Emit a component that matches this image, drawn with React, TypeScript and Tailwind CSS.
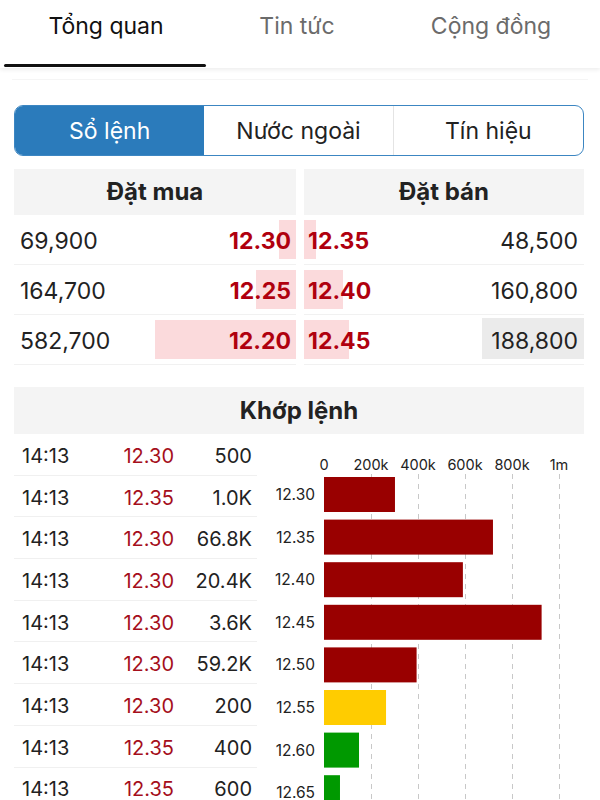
import React from "react";

const bids = [
  { vol: "69,900", price: "12.30", bar: 17 },
  { vol: "164,700", price: "12.25", bar: 40 },
  { vol: "582,700", price: "12.20", bar: 141 },
];

const asks = [
  { vol: "48,500", price: "12.35", bar: 12, hi: false },
  { vol: "160,800", price: "12.40", bar: 39, hi: false },
  { vol: "188,800", price: "12.45", bar: 45, hi: true },
];

const trades = [
  ["14:13", "12.30", "500"],
  ["14:13", "12.35", "1.0K"],
  ["14:13", "12.30", "66.8K"],
  ["14:13", "12.30", "20.4K"],
  ["14:13", "12.30", "3.6K"],
  ["14:13", "12.30", "59.2K"],
  ["14:13", "12.30", "200"],
  ["14:13", "12.35", "400"],
  ["14:13", "12.35", "600"],
];

// volume per price level, thousands
const levels = [
  { p: "12.30", v: 302, c: "#990000" },
  { p: "12.35", v: 719, c: "#990000" },
  { p: "12.40", v: 591, c: "#990000" },
  { p: "12.45", v: 926, c: "#990000" },
  { p: "12.50", v: 394, c: "#990000" },
  { p: "12.55", v: 264, c: "#ffcc00" },
  { p: "12.60", v: 149, c: "#009900" },
  { p: "12.65", v: 68, c: "#009900" },
];

const font = { fontFamily: "Inter, Roboto, 'Noto Sans', sans-serif" };

function VolumeChart() {
  const x0 = 54;
  const step = 47; // px per 200k
  const ticks = ["0", "200k", "400k", "600k", "800k", "1m"];
  return (
    <svg width="314" height="375" className="block" style={font}>
      {ticks.map((t, i) => (
        <text key={t} x={x0 + i * step} y={36} textAnchor="middle" fontSize="14.5" fill="#222">
          {t}
        </text>
      ))}
      {ticks.slice(1).map((t, i) => (
        <line
          key={t}
          x1={x0 + (i + 1) * step + 0.5}
          x2={x0 + (i + 1) * step + 0.5}
          y1={40}
          y2={375}
          stroke="#c8c8c8"
          strokeDasharray="5 5"
        />
      ))}
      {levels.map((l, i) => {
        const y = 43 + i * 42.6;
        return (
          <g key={l.p}>
            <rect x={x0} y={y} width={(l.v / 1000) * step * 5} height={35} fill={l.c} />
            <text x={45} y={y + 23} textAnchor="end" fontSize="15.5" fill="#222">
              {l.p}
            </text>
          </g>
        );
      })}
    </svg>
  );
}

export default function App() {
  return (
    <div className="w-[600px] h-[800px] overflow-hidden bg-white text-[#222]" style={font}>
      {/* top tabs */}
      <div className="flex h-[68px] shadow-[0_2px_4px_rgba(0,0,0,0.07)]">
        <div className="flex w-[212px] flex-col items-center">
          <span className="pt-[10px] text-[23px] leading-[32px] text-[#111]">Tổng quan</span>
          <div className="mt-auto mb-px h-[3px] w-[202px] -translate-x-[1px] rounded-full bg-[#111]" />
        </div>
        <div className="flex w-[170px] justify-center">
          <span className="pt-[10px] text-[23px] leading-[32px] text-[#6b6b6b]">Tin tức</span>
        </div>
        <div className="flex w-[218px] justify-center">
          <span className="pt-[10px] text-[23px] leading-[32px] text-[#6b6b6b]">Cộng đồng</span>
        </div>
      </div>
      <div className="mx-[12px] mt-[11px] h-px bg-[#f5f5f5]" />

      <div className="pl-[14px] pr-[16px]">
        {/* segmented control */}
        <div className="mt-[25px] grid h-[51px] grid-cols-3 overflow-hidden rounded-[9px] border-[1.5px] border-[#3c86c2]">
          <div className="flex items-center justify-center bg-[#2b7bbb] pt-px text-[23px] text-white">Sổ lệnh</div>
          <div className="flex items-center justify-center border-r border-[#e4e4e4] pt-px text-[23px] text-[#222]">Nước ngoài</div>
          <div className="flex items-center justify-center pt-px text-[23px] text-[#222]">Tín hiệu</div>
        </div>

        {/* order book */}
        <div className="mt-[13px] flex gap-[8px]">
          <div className="w-[282px]">
            <div className="flex h-[46px] items-center justify-center bg-[#f4f4f4] text-[24px] font-bold text-[#222]">Đặt mua</div>
            {bids.map((b) => (
              <div key={b.price} className="relative flex h-[50px] items-center justify-between border-b border-[#f1f1f1] pl-[6px] pr-[5px] pt-[3px]">
                <div className="absolute right-0 top-[5px] bottom-[5px] bg-[#fbdadc]" style={{ width: b.bar }} />
                <span className="relative text-[23px]">{b.vol}</span>
                <span className="relative text-[23px] font-bold text-[#b0000e]">{b.price}</span>
              </div>
            ))}
          </div>
          <div className="w-[280px]">
            <div className="flex h-[46px] items-center justify-center bg-[#f4f4f4] text-[24px] font-bold text-[#222]">Đặt bán</div>
            {asks.map((a) => (
              <div key={a.price} className="relative flex h-[50px] items-center justify-between border-b border-[#f1f1f1] pl-[4px] pr-[6px] pt-[3px]">
                <div className="absolute left-0 top-[5px] bottom-[5px] bg-[#fbdadc]" style={{ width: a.bar }} />
                {a.hi && <div className="absolute right-0 top-[3px] bottom-[5px] w-[102px] bg-[#ebebeb]" />}
                <span className="relative text-[23px] font-bold text-[#b0000e]">{a.price}</span>
                <span className="relative text-[23px]">{a.vol}</span>
              </div>
            ))}
          </div>
        </div>

        {/* matched orders */}
        <div className="mt-[22px] flex h-[47px] items-center justify-center bg-[#f4f4f4] text-[24px] font-bold text-[#222]">Khớp lệnh</div>
        <div className="flex gap-[13px]">
          <div className="w-[243px]">
            {trades.map((t, i) => (
              <div key={i} className="flex h-[41.7px] items-center border-b border-[#f0f0f0] pt-[3px] text-[20px]">
                <span className="w-[88px] pl-[8px]">{t[0]}</span>
                <span className="w-[72px] text-right text-[#a50f1c]">{t[1]}</span>
                <span className="w-[78px] text-right">{t[2]}</span>
              </div>
            ))}
          </div>
          <VolumeChart />
        </div>
      </div>
    </div>
  );
}
